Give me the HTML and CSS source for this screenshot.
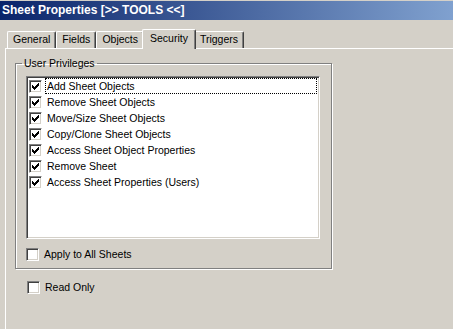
FILE: index.html
```html
<!DOCTYPE html>
<html lang="en">
<head>
  <meta charset="UTF-8" />
  <title>Sheet Properties</title>
  <link rel="stylesheet" href="styles.css">
</head>
<body>
  <div class="titlebar">Sheet Properties [&gt;&gt; TOOLS &lt;&lt;]</div>

  <div class="tabs">
    <div class="tab">General</div>
    <div class="tab">Fields</div>
    <div class="tab">Objects</div>
    <div class="tab active">Security</div>
    <div class="tab">Triggers</div>
  </div>

  <div class="panel">
    <fieldset class="group">
      <legend>User Privileges</legend>
      <div class="list">
        <div class="item"><span class="check"><svg width="11" height="11" viewBox="0 0 11 11" shape-rendering="crispEdges"><path d="M8 2h1v1h-1zM7 3h2v1h-2zM2 4h1v1h-1zM6 4h3v1h-3zM2 5h2v1h-2zM5 5h3v1h-3zM2 6h5v1h-5zM3 7h3v1h-3zM4 8h1v1h-1z"/></svg></span><span class="label focus">Add Sheet Objects</span></div>
        <div class="item"><span class="check"><svg width="11" height="11" viewBox="0 0 11 11" shape-rendering="crispEdges"><path d="M8 2h1v1h-1zM7 3h2v1h-2zM2 4h1v1h-1zM6 4h3v1h-3zM2 5h2v1h-2zM5 5h3v1h-3zM2 6h5v1h-5zM3 7h3v1h-3zM4 8h1v1h-1z"/></svg></span><span class="label">Remove Sheet Objects</span></div>
        <div class="item"><span class="check"><svg width="11" height="11" viewBox="0 0 11 11" shape-rendering="crispEdges"><path d="M8 2h1v1h-1zM7 3h2v1h-2zM2 4h1v1h-1zM6 4h3v1h-3zM2 5h2v1h-2zM5 5h3v1h-3zM2 6h5v1h-5zM3 7h3v1h-3zM4 8h1v1h-1z"/></svg></span><span class="label">Move/Size Sheet Objects</span></div>
        <div class="item"><span class="check"><svg width="11" height="11" viewBox="0 0 11 11" shape-rendering="crispEdges"><path d="M8 2h1v1h-1zM7 3h2v1h-2zM2 4h1v1h-1zM6 4h3v1h-3zM2 5h2v1h-2zM5 5h3v1h-3zM2 6h5v1h-5zM3 7h3v1h-3zM4 8h1v1h-1z"/></svg></span><span class="label">Copy/Clone Sheet Objects</span></div>
        <div class="item"><span class="check"><svg width="11" height="11" viewBox="0 0 11 11" shape-rendering="crispEdges"><path d="M8 2h1v1h-1zM7 3h2v1h-2zM2 4h1v1h-1zM6 4h3v1h-3zM2 5h2v1h-2zM5 5h3v1h-3zM2 6h5v1h-5zM3 7h3v1h-3zM4 8h1v1h-1z"/></svg></span><span class="label">Access Sheet Object Properties</span></div>
        <div class="item"><span class="check"><svg width="11" height="11" viewBox="0 0 11 11" shape-rendering="crispEdges"><path d="M8 2h1v1h-1zM7 3h2v1h-2zM2 4h1v1h-1zM6 4h3v1h-3zM2 5h2v1h-2zM5 5h3v1h-3zM2 6h5v1h-5zM3 7h3v1h-3zM4 8h1v1h-1z"/></svg></span><span class="label">Remove Sheet</span></div>
        <div class="item"><span class="check"><svg width="11" height="11" viewBox="0 0 11 11" shape-rendering="crispEdges"><path d="M8 2h1v1h-1zM7 3h2v1h-2zM2 4h1v1h-1zM6 4h3v1h-3zM2 5h2v1h-2zM5 5h3v1h-3zM2 6h5v1h-5zM3 7h3v1h-3zM4 8h1v1h-1z"/></svg></span><span class="label">Access Sheet Properties (Users)</span></div>
      </div>
      <div class="option apply"><span class="check"></span><span>Apply to All Sheets</span></div>
    </fieldset>

    <div class="option readonly"><span class="check"></span><span>Read Only</span></div>
  </div>
</body>
</html>
```

FILE: styles.css
```css
body {
  margin: 0;
  padding-top: 1px;
  width: 453px;
  height: 328px;
  overflow: hidden;
  background-color: #d4d0c8;
  color: #000;
  font-family: 'Liberation Sans', Arial, sans-serif;
  font-size: 10.5px;
}
.titlebar {
  height: 19px;
  line-height: 19px;
  padding-left: 2px;
  background: linear-gradient(to right, #0a246a, #80a1cf);
  color: #fff;
  font-weight: bold;
  font-size: 12px;
  white-space: nowrap;
}
.tabs {
  display: flex;
  align-items: flex-end;
  height: 28px;
  padding-left: 7px;
  position: relative;
  z-index: 1;
}
.tab {
  box-sizing: border-box;
  height: 17px;
  line-height: 15px;
  padding: 0 5px;
  border-top: 1px solid #fff;
  border-left: 1px solid #fff;
  border-right: 1px solid #404040;
  box-shadow: inset -1px 0 #808080;
  border-top-left-radius: 2px;
  border-top-right-radius: 2px;
  background-color: #d4d0c8;
}
.tab.active {
  height: 20px;
  line-height: 16px;
  margin: 0 -2px -1px -2px;
  padding: 0 7px;
  position: relative;
}
.panel {
  box-sizing: border-box;
  height: 281px;
  margin-left: 5px;
  border-top: 1px solid #fff;
  border-left: 1px solid #fff;
}
.group {
  box-sizing: border-box;
  width: 317px;
  margin: 8px 0 0 9px;
  padding: 6px 0 6px 10px;
  border: 1px solid #808080;
  box-shadow: inset 1px 1px #fff, 1px 1px #fff;
}
.group legend {
  margin-left: -4px;
  padding: 0 2px;
  line-height: 13px;
}
.list {
  box-sizing: border-box;
  width: 294px;
  height: 163px;
  background-color: #fff;
  border-top: 1px solid #808080;
  border-left: 1px solid #808080;
  border-right: 1px solid #fff;
  border-bottom: 1px solid #fff;
  box-shadow: inset 1px 1px #404040, inset -1px -1px #d4d0c8;
  padding: 1px;
}
.item {
  display: flex;
  align-items: center;
  height: 16px;
}
.item .check {
  margin-left: 1px;
}
.label {
  flex: 1;
  box-sizing: border-box;
  height: 16px;
  line-height: 14px;
  margin: 0 1px 0 3px;
  padding-left: 1px;
  border: 1px dotted transparent;
}
.label.focus {
  border-color: #000;
}
.check {
  box-sizing: border-box;
  flex: none;
  width: 13px;
  height: 13px;
  background-color: #fff;
  border-top: 1px solid #808080;
  border-left: 1px solid #808080;
  border-right: 1px solid #fff;
  border-bottom: 1px solid #fff;
  box-shadow: inset 1px 1px #404040, inset -1px -1px #d4d0c8;
}
.check svg {
  display: block;
}
.option {
  display: flex;
  align-items: center;
  gap: 5px;
  height: 16px;
}
.apply {
  margin-top: 7px;
}
.readonly {
  margin: 10px 0 0 21px;
}
```
